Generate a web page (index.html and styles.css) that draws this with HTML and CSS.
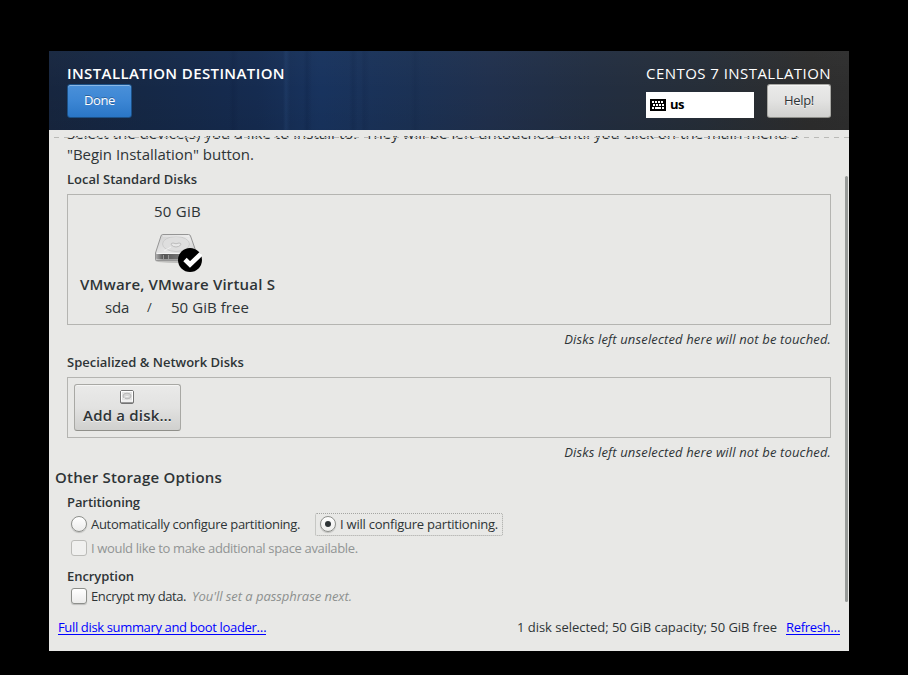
FILE: index.html
```html
<!DOCTYPE html>
<html lang="en">
<head>
<meta charset="utf-8">
<title>Installation Destination</title>
<link rel="stylesheet" href="styles.css">
</head>
<body>
<main class="window">
  <header class="header">
    <div class="header-left">
      <h1 class="title">INSTALLATION DESTINATION</h1>
      <button class="button primary">Done</button>
    </div>
    <div class="header-right">
      <div class="product">CENTOS 7 INSTALLATION</div>
      <div class="header-controls">
        <div class="keyboard">
          <svg width="16" height="12" viewBox="0 0 16 12" shape-rendering="crispEdges">
            <rect width="16" height="12" rx="1" fill="#000"/>
            <path d="M2 3h2M5 3h2M8 3h2M11 3h2M3 6h2M6 6h2M9 6h2M12 6h2M2 9h2M5 9h6M12 9h2" stroke="#fff" stroke-width="2"/>
          </svg>
          <span class="layout">us</span>
        </div>
        <button class="button help">Help!</button>
      </div>
    </div>
  </header>

  <div class="viewport">
    <div class="content">
      <p class="intro"><span class="intro-first">Select the device(s) you'd like to install to.&nbsp; They will be left untouched until you click on the main menu's</span><br><span class="intro-second">"Begin Installation" button.</span></p>
      <h3 class="label local">Local Standard Disks</h3>
      <section class="frame disks">
        <div class="disk">
          <div class="disk-size">50 GiB</div>
          <svg class="disk-icon" width="48" height="42" viewBox="1 0 48 42">
            <defs>
              <linearGradient id="top" x1="0" y1="0" x2="1" y2="1"><stop offset="0" stop-color="#cfcfcf"/><stop offset=".5" stop-color="#e9e9e9"/><stop offset="1" stop-color="#bdbdbd"/></linearGradient>
              <linearGradient id="side" x1="0" y1="0" x2="1" y2="0"><stop offset="0" stop-color="#aaa"/><stop offset=".18" stop-color="#555"/><stop offset=".6" stop-color="#777"/><stop offset="1" stop-color="#bbb"/></linearGradient>
            </defs>
            <ellipse cx="23" cy="28.500" rx="21" ry="2.500" fill="#000" opacity=".18"/>
            <path d="M9.500 2.500h26q1.500 0 2 1.500l6 17v6q0 1.500-1.500 1.500H4q-1.500 0-1.500-1.500v-6l5.500-17q.4-1.500 1.500-1.500z" fill="url(#top)" stroke="#959595"/>
            <path d="M3 21.500h40v4.500q0 1.500-1.500 1.500h-37Q3 27.500 3 26z" fill="url(#side)"/>
            <path d="M3.500 21.500h39.500" stroke="#f5f5f5"/>
            <ellipse cx="23" cy="12" rx="13.500" ry="7.500" fill="#dedede" stroke="#c6c6c6" stroke-width=".8"/>
            <path d="M18 12.500q0-1.500 2-1.500 3 1.500 6 0 2 0 2 1.500-2 2.500-5 2.500t-5-2.500z" fill="#e8e8e8" stroke="#b2b2b2" stroke-width=".8"/>
            <path d="M10 4h26M11 19l7-4" stroke="#fff" stroke-width=".8" opacity=".7"/>
            <path d="M10.500 23v4M15.500 23v4" stroke="#999" stroke-width="1"/>
            <circle cx="37" cy="28" r="12" fill="#000"/>
            <path d="M32 27.500l5 5L48 22" fill="none" stroke="#fff" stroke-width="4.800"/>
          </svg>
          <div class="disk-name">VMware, VMware Virtual S</div>
          <div class="disk-details"><span class="device">sda</span><span class="slash">/</span><span>50 GiB free</span></div>
        </div>
      </section>
      <p class="note">Disks left unselected here will not be touched.</p>
      <h3 class="label special">Specialized &amp; Network Disks</h3>
      <section class="frame network">
        <button class="button add">
          <svg class="add-icon" width="14" height="14" viewBox="0 0 14 14">
            <rect x=".5" y=".5" width="13" height="13" rx="1.500" fill="#e3e3e3" stroke="#747474"/>
            <rect x="1.500" y="1.500" width="11" height="9.500" fill="none" stroke="#fff"/>
            <ellipse cx="7" cy="6" rx="4" ry="2.800" fill="#d5d5d5" stroke="#b8b8b8"/>
            <path d="M5.500 6.500h3M3 9l2-1" stroke="#eee"/>
            <path d="M1 12.500h12" stroke="#999"/>
          </svg>
          <span>Add a disk…</span>
        </button>
      </section>
      <p class="note">Disks left unselected here will not be touched.</p>
      <h2 class="options">Other Storage Options</h2>
      <h3 class="label partitioning">Partitioning</h3>
      <div class="radios">
        <label class="choice auto"><i class="radio"></i><span>Automatically configure partitioning.</span></label>
        <label class="choice manual"><i class="radio checked"></i><span>I will configure partitioning.</span></label>
      </div>
      <label class="choice space"><i class="check disabled"></i><span>I would like to make additional space available.</span></label>
      <h3 class="label encryption">Encryption</h3>
      <label class="choice encrypt"><i class="check"></i><span>Encrypt my data.</span><em>You'll set a passphrase next.</em></label>
    </div>
    <div class="undershoot"></div>
    <div class="scrollbar"></div>
  </div>

  <footer class="footer">
    <a class="summary">Full disk summary and boot loader…</a>
    <span class="status">1 disk selected; 50 GiB capacity; 50 GiB free</span>
    <a class="refresh">Refresh…</a>
  </footer>
</main>
</body>
</html>
```
FILE: styles.css
```css
* { box-sizing: border-box; }
body {
  margin: 0;
  padding: 51px 0 0 49px;
  height: 675px;
  overflow: hidden;
  background: #000;
  color: #2e3436;
  font: 13px/18px "Open Sans", "Noto Sans", sans-serif;
  white-space: nowrap;
}
h1, h2, h3, p { margin: 0; }
svg { display: block; }
.window {
  width: 800px;
  height: 600px;
  display: flex;
  flex-direction: column;
  background: #e8e8e6;
}

.header {
  height: 79px;
  flex: none;
  display: flex;
  justify-content: space-between;
  padding: 12px 18px 0;
  color: #fff;
  background:
    linear-gradient(rgba(255,255,255,.02), transparent 50%, rgba(0,0,0,.05)),
    linear-gradient(90deg, transparent 180px, rgba(0,15,45,.12) 184px, transparent 190px 234px, rgba(70,120,180,.12) 237px, transparent 241px 254px, rgba(0,15,45,.15) 258px, transparent 263px 300px, rgba(0,15,45,.12) 304px, transparent 309px 312px, rgba(0,15,45,.1) 315px, transparent 321px 361px, rgba(0,15,45,.08) 366px, transparent 372px),
    linear-gradient(90deg, #17263f 0, #152846 12%, #152b50 26%, #18335e 34%, #1b3154 46%, #20304d 55%, #222e41 68%, #262e38 82%, #2d2d2d 95%, #2e2e2e);
}
.title, .product { height: 21px; font-size: 15px; line-height: 21px; }
.title { font-weight: 600; letter-spacing: .39px; }
.product { letter-spacing: .45px; }
.header-controls { display: flex; justify-content: space-between; align-items: flex-end; }
.header-right { width: 185px; }
.keyboard {
  width: 108px;
  height: 26px;
  padding-left: 4px;
  display: flex;
  align-items: center;
  gap: 4px;
  background: #fff;
  color: #000;
}
.layout { padding-bottom: 2px; font-weight: 700; letter-spacing: -.6px; }
.button {
  margin: 0;
  padding: 0 0 2px;
  height: 34px;
  border: 1px solid #a8a8a4;
  border-bottom-color: #8f8f8a;
  border-radius: 3px;
  background: linear-gradient(#eaeae9, #e2e2e1 50%, #d0d0ce);
  box-shadow: inset 0 1px #f5f5f4;
  color: #2e3436;
  font: inherit;
  text-shadow: 0 1px rgba(255,255,255,.7);
  letter-spacing: -.35px;
}
.primary {
  display: block;
  width: 65px;
  border-color: #1c5187;
  background: linear-gradient(#4a90d9, #3c86d4 50%, #2a76c6);
  box-shadow: inset 0 1px #8bb8e6;
  color: #fff;
  text-shadow: 0 -1px rgba(0,0,0,.3);
}
.help { width: 64px; }

.viewport { position: relative; height: 471px; margin-top: 6px; flex: none; overflow: hidden; }
.content { margin-top: -13px; padding: 0 18px; }
.intro { height: 42px; font-size: 15px; line-height: 21px; }
.intro-first { letter-spacing: .045px; }
.intro-second { letter-spacing: -.03px; }
.label { height: 18px; font-size: 13px; line-height: 16px; font-weight: 600; }
.local { margin-top: 6px; }
.frame { border: 1px solid #b4b4b1; }
.disks { height: 131px; margin-top: 5px; padding: 5px 12px; }
.disk { width: 195px; display: flex; flex-direction: column; align-items: center; }
.disk-size { height: 22px; font-size: 15px; line-height: 22px; letter-spacing: .26px; }
.disk-icon { margin-top: 10px; }
.disk-name { height: 23px; margin-top: -1px; font-size: 15px; line-height: 23px; font-weight: 600; letter-spacing: .18px; }
.disk-details { height: 23px; margin-left: -1px; display: flex; font-size: 15px; line-height: 23px; letter-spacing: .06px; }
.device { letter-spacing: -.2px; }
.slash { margin: 0 19px 0 18px; font-size: 13px; }
.note { height: 18px; margin-top: 6px; line-height: 16px; font-style: italic; letter-spacing: .15px; text-align: right; }
.special { margin-top: 5px; }
.network { height: 61px; margin-top: 5px; padding: 6px; }
.add {
  width: 107px;
  height: 47px;
  display: flex;
  flex-direction: column;
  align-items: center;
  padding: 5px 0 0;
  font-size: 15px;
  line-height: 22px;
  font-weight: 600;
  letter-spacing: .2px;
}
.add-icon { margin-right: 1px; }
.options { height: 22px; margin: 5px 0 0 -12px; font-size: 15px; line-height: 20px; font-weight: 600; letter-spacing: .2px; }
.partitioning { margin-top: 5px; letter-spacing: -.08px; }
.radios { display: flex; height: 23px; margin-top: 1px; }
.choice { display: flex; align-items: center; letter-spacing: -.32px; }
.radio, .check {
  width: 16px;
  height: 16px;
  flex: none;
  margin-right: 4px;
  border: 1px solid #8d8f8b;
  background: linear-gradient(#fff, #ececeb);
  box-shadow: 0 1px 1px rgba(0,0,0,.18);
}
.radio { border-radius: 50%; display: flex; align-items: center; justify-content: center; }
.checked::after { content: ""; width: 6px; height: 6px; border-radius: 50%; background: #2e3436; }
.check { border-radius: 3px; }
.disabled { border-color: #bbbbb8; background: #f0f0ef; box-shadow: none; }
.auto { width: 248px; padding: 0 0 2px 4px; letter-spacing: -.3px; }
.manual { width: 188px; height: 23px; padding: 0 0 2px 4px; border: 1px dotted #a4a5a2; border-radius: 2px; letter-spacing: -.23px; }
.space { height: 22px; margin-top: 1px; padding-left: 4px; color: #919494; letter-spacing: -.34px; }
.encryption { margin-top: 8px; line-height: 18px; letter-spacing: -.06px; }
.encrypt { height: 20px; margin-top: 1px; padding-left: 4px; letter-spacing: -.41px; }
.encrypt em { margin-left: 6px; color: #8d908f; letter-spacing: -.05px; }
.undershoot {
  position: absolute;
  top: 1px;
  left: 5px;
  right: 0;
  height: 1px;
  background: repeating-linear-gradient(90deg, #babab7 0 5px, transparent 5px 10px);
}
.scrollbar { position: absolute; top: 40px; right: 1px; width: 3px; height: 426px; border-radius: 2px; background: #989b99; }

.footer { height: 20px; margin: 11px 9px 0; display: flex; align-items: flex-start; }
.footer a { height: 17px; border-bottom: 1px solid #00f; color: #00f; line-height: 18px; }
.summary { margin-right: auto; letter-spacing: -.35px; }
.status { line-height: 18px; letter-spacing: -.03px; }
.refresh { margin-left: 9px; letter-spacing: -.32px; }
```
